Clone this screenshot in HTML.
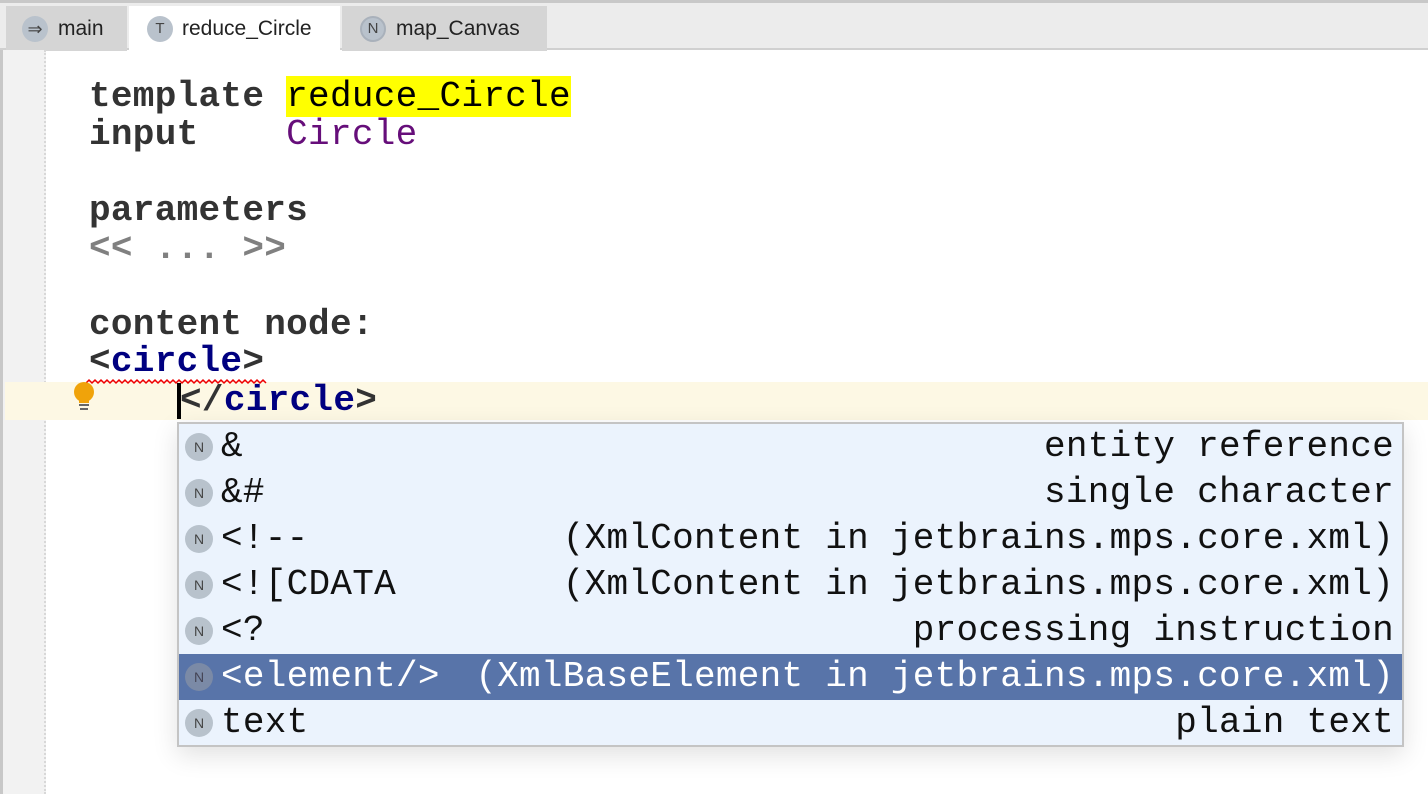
<!DOCTYPE html>
<html><head><style>
*{margin:0;padding:0;box-sizing:border-box}
body{width:1428px;height:794px;overflow:hidden;background:#fff;position:relative;font-family:"Liberation Sans",sans-serif}
.tabbar{position:absolute;left:0;top:0;width:1428px;height:50px;background:#ececec;border-top:3px solid #c8c8c8;border-bottom:2px solid #d0d0d0}
.tab{position:absolute;top:3px;height:45px;background:#d5d5d5;font-size:21px;color:#222;line-height:45px}
.tab .ic{position:absolute;top:10px;width:26px;height:26px;border-radius:50%;background:#b9c2cc;color:#444;font-size:15px;text-align:center;line-height:26px}
.lb{position:absolute;left:0;top:50px;width:3px;height:744px;background:#c8c8c8}
.gut{position:absolute;left:3px;top:50px;width:43px;height:744px;background:#f2f2f2;border-right:2px dotted #d8d8d8}
.code{position:absolute;font-family:"Liberation Mono",monospace;font-weight:bold;font-size:36px;line-height:38px;white-space:pre;color:#333;letter-spacing:0.3px}
.pop{position:absolute;left:177px;top:422px;width:1227px;height:325px;background:#ebf3fd;border:2px solid #c4c4c4;box-shadow:0 8px 24px rgba(0,0,0,.12)}
.row{position:absolute;left:0;width:1223px;height:46px;font-family:"Liberation Mono",monospace;font-size:36px;line-height:46px;white-space:pre;color:#111;letter-spacing:0.27px}
.row .n{position:absolute;left:6px;top:9px;width:28px;height:28px;border-radius:50%;background:#b8c2cc;color:#444;font-family:"Liberation Sans",sans-serif;font-size:14px;line-height:28px;text-align:center;letter-spacing:0}
.row .l{position:absolute;left:42px;top:0}
.row .r{position:absolute;right:8px;top:0}
.sel{background:#5874a9;color:#fff}
.sel .n{background:#7b8aa6;color:#445}
</style></head><body>
<div class="tabbar">
 <div class="tab" style="left:6px;width:121px"><span class="ic" style="left:16px;font-size:18px">⇒</span><span style="position:absolute;left:52px">main</span></div>
 <div class="tab" style="left:129px;width:211px;background:#fff;height:47px"><span class="ic" style="left:18px">T</span><span style="position:absolute;left:53px">reduce_Circle</span></div>
 <div class="tab" style="left:342px;width:205px"><span class="ic" style="left:18px;border:2px solid #a9b1bb;line-height:22px">N</span><span style="position:absolute;left:54px">map_Canvas</span></div>
</div>
<div class="lb"></div>
<div class="gut"></div>
<div style="position:absolute;left:5px;top:382px;width:1423px;height:38px;background:#fdf8e4"></div>
<div class="code" style="left:89px;top:78px">template <span style="background:#ffff00;color:#000;font-weight:normal">reduce_Circle</span></div>
<div class="code" style="left:89px;top:116px">input    <span style="color:#660e7a;font-weight:normal">Circle</span></div>
<div class="code" style="left:89px;top:192px">parameters</div>
<div class="code" style="left:89px;top:230px;color:#808080">&lt;&lt; ... &gt;&gt;</div>
<div class="code" style="left:89px;top:306px">content node:</div>
<div class="code" style="left:89px;top:343px">&lt;<span style="color:#000080">circle</span>&gt;</div>
<svg style="position:absolute;left:86px;top:378px" width="182" height="8"><polyline fill="none" stroke="#e00" stroke-width="1.5" points="0,5 3,2 6,5 9,2 12,5 15,2 18,5 21,2 24,5 27,2 30,5 33,2 36,5 39,2 42,5 45,2 48,5 51,2 54,5 57,2 60,5 63,2 66,5 69,2 72,5 75,2 78,5 81,2 84,5 87,2 90,5 93,2 96,5 99,2 102,5 105,2 108,5 111,2 114,5 117,2 120,5 123,2 126,5 129,2 132,5 135,2 138,5 141,2 144,5 147,2 150,5 153,2 156,5 159,2 162,5 165,2 168,5 171,2 174,5 177,2 180,5"/></svg>
<div class="code" style="left:180px;top:382px">&lt;/<span style="color:#000080">circle</span>&gt;</div>
<div style="position:absolute;left:177px;top:383px;width:4px;height:36px;background:#000"></div>
<svg style="position:absolute;left:72px;top:382px" width="24" height="30"><circle cx="12" cy="10" r="10" fill="#f0a30a"/><rect x="7" y="16" width="10" height="5" fill="#f0a30a"/><rect x="7" y="22" width="10" height="2" fill="#666"/><rect x="8" y="26" width="8" height="2" fill="#666"/></svg>
<div class="pop">
 <div class="row" style="top:0"><span class="n">N</span><span class="l">&amp;</span><span class="r">entity reference</span></div>
 <div class="row" style="top:46px"><span class="n">N</span><span class="l">&amp;#</span><span class="r">single character</span></div>
 <div class="row" style="top:92px"><span class="n">N</span><span class="l">&lt;!--</span><span class="r">(XmlContent in jetbrains.mps.core.xml)</span></div>
 <div class="row" style="top:138px"><span class="n">N</span><span class="l">&lt;![CDATA</span><span class="r">(XmlContent in jetbrains.mps.core.xml)</span></div>
 <div class="row" style="top:184px"><span class="n">N</span><span class="l">&lt;?</span><span class="r">processing instruction</span></div>
 <div class="row sel" style="top:230px"><span class="n">N</span><span class="l">&lt;element/&gt;</span><span class="r">(XmlBaseElement in jetbrains.mps.core.xml)</span></div>
 <div class="row" style="top:276px"><span class="n">N</span><span class="l">text</span><span class="r">plain text</span></div>
</div>
</body></html>
